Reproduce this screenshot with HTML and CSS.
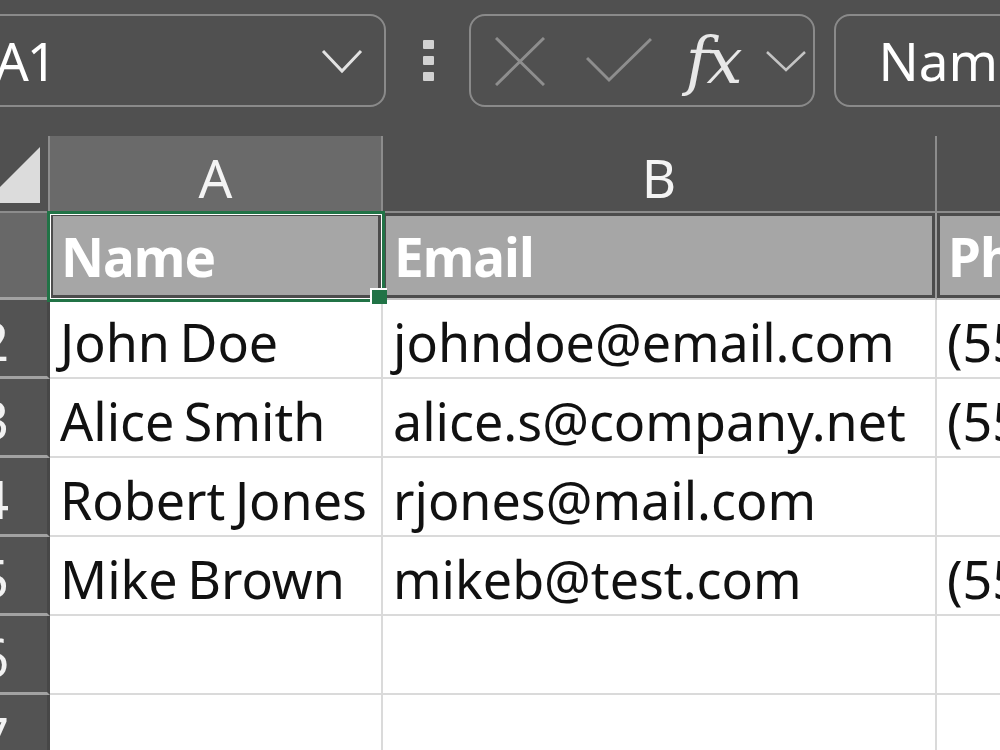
FILE: index.html
```html
<!DOCTYPE html>
<html lang="en">
<head>
    <meta charset="UTF-8">
    <meta name="viewport" content="width=device-width, initial-scale=1.0">
    <title>Contacts - Sheet</title>
    <link rel="stylesheet" href="styles.css">
</head>
<body>
    <div class="toolbar">
        <div class="namebox">
            <span class="namebox-text">A1</span>
            <svg class="chevron" width="42" height="26" viewBox="0 0 42 26">
                <path d="M2 3 L21 23 L40 3" fill="none" stroke="#e2e2e2" stroke-width="3"/>
            </svg>
        </div>

        <div class="kebab">
            <span></span><span></span><span></span>
        </div>

        <div class="fx-group">
            <svg class="icon-cancel" width="50" height="49" viewBox="0 0 50 49">
                <path d="M1 1 L49 48 M49 1 L1 48" stroke="#8e8e8e" stroke-width="3"/>
            </svg>
            <svg class="icon-enter" width="66" height="46" viewBox="0 0 66 46">
                <path d="M1 21 L23 43 L65 2" fill="none" stroke="#8e8e8e" stroke-width="3"/>
            </svg>
            <span class="fx">fx</span>
            <svg class="chevron-small" width="40" height="22" viewBox="0 0 40 22">
                <path d="M1 2 L20 20 L39 2" fill="none" stroke="#c4c4c4" stroke-width="2.5"/>
            </svg>
        </div>

        <div class="formula-input">Name</div>
    </div>

    <div class="sheet">
        <!-- column headers -->
        <div class="corner"></div>
        <div class="col-head selected">A</div>
        <div class="col-head">B</div>
        <div class="col-head">C</div>

        <!-- row 1: table header -->
        <div class="row-head selected">1</div>
        <div class="cell head">Name</div>
        <div class="cell head">Email</div>
        <div class="cell head">Phone</div>

        <div class="row-head">2</div>
        <div class="cell">John Doe</div>
        <div class="cell">johndoe@email.com</div>
        <div class="cell">(555) 123-4567</div>

        <div class="row-head">3</div>
        <div class="cell">Alice Smith</div>
        <div class="cell">alice.s@company.net</div>
        <div class="cell">(555) 987-6543</div>

        <div class="row-head">4</div>
        <div class="cell">Robert Jones</div>
        <div class="cell">rjones@mail.com</div>
        <div class="cell"></div>

        <div class="row-head">5</div>
        <div class="cell">Mike Brown</div>
        <div class="cell">mikeb@test.com</div>
        <div class="cell">(555) 246-8135</div>

        <div class="row-head">6</div>
        <div class="cell"></div>
        <div class="cell"></div>
        <div class="cell"></div>

        <div class="row-head">7</div>
        <div class="cell"></div>
        <div class="cell"></div>
        <div class="cell"></div>

        <!-- active cell outline -->
        <div class="selection">
            <div class="fill-handle"></div>
        </div>
    </div>
</body>
</html>
```

FILE: styles.css
```css
body {
    margin: 0;
    width: 1000px;
    height: 750px;
    overflow: hidden;
    background-color: #505050;
    font-family: "Noto Sans", "Open Sans", sans-serif;
    font-size: 53px;
    line-height: 1;
    color: #f2f2f2;
}

/* Formula bar */
.toolbar {
    height: 136px;
    box-sizing: border-box;
    padding-top: 14px;
    display: flex;
    align-items: flex-start;
    white-space: nowrap;
}

.namebox {
    width: 406px;
    height: 93px;
    box-sizing: border-box;
    margin-left: -20px;
    padding: 0 21px 0 13px;
    border: 2px solid #8a8a8a;
    border-radius: 16px;
    display: flex;
    align-items: center;
    justify-content: space-between;
}

.namebox-text {
    color: #ffffff;
    letter-spacing: -2px;
}

.kebab {
    margin-left: 37px;
    height: 93px;
    display: flex;
    flex-direction: column;
    justify-content: center;
    gap: 7px;
}

.kebab span {
    display: block;
    width: 11px;
    height: 9px;
    background-color: #d2d2d2;
    border-radius: 1px;
}

.fx-group {
    margin-left: 35px;
    width: 346px;
    height: 93px;
    box-sizing: border-box;
    border: 2px solid #8a8a8a;
    border-radius: 16px;
    display: flex;
    align-items: center;
    padding-left: 24px;
}

.icon-cancel {
    margin-top: 2px;
}

.icon-enter {
    margin-left: 41px;
    margin-top: -2px;
}

.fx {
    margin-left: 34px;
    width: 60px;
    font-family: "DejaVu Serif", "Liberation Serif", serif;
    font-style: italic;
    font-size: 64px;
    letter-spacing: -3px;
    color: #e8e8e8;
}

.chevron-small {
    margin-left: 20px;
}

.formula-input {
    margin-left: 19px;
    flex: 1;
    margin-right: -30px;
    height: 93px;
    box-sizing: border-box;
    border: 2px solid #8a8a8a;
    border-radius: 16px;
    padding-left: 43px;
    display: flex;
    align-items: center;
    color: #ffffff;
}

/* Grid */
.sheet {
    position: relative;
    display: grid;
    grid-template-columns: 50px 333px 554px 420px;
    grid-template-rows: 77px 87px repeat(6, 79px);
}

.sheet > div {
    box-sizing: border-box;
    white-space: nowrap;
    overflow: hidden;
}

.corner {
    position: relative;
    border-right: 2px solid #8c8c8c;
    border-bottom: 2px solid #8c8c8c;
}

.corner::after {
    content: "";
    position: absolute;
    right: 8px;
    top: 11px;
    width: 56px;
    height: 56px;
    background-color: #dcdcdc;
    clip-path: polygon(100% 0, 100% 100%, 0 100%);
}

.col-head {
    display: flex;
    justify-content: center;
    align-items: flex-end;
    padding-bottom: 7px;
    border-right: 2px solid #8c8c8c;
    border-bottom: 2px solid #8c8c8c;
    color: #f4f4f4;
}

.col-head.selected {
    background-color: #6a6a6a;
}

.row-head {
    display: flex;
    justify-content: flex-end;
    align-items: flex-end;
    padding-right: 38px;
    padding-bottom: 9px;
    background-color: #535353;
    border-right: 3px solid #474747;
    border-bottom: 3px solid #a2a2a2;
    color: #f2f2f2;
}

.row-head.selected {
    background-color: #686868;
    padding-bottom: 15px;
}

.cell {
    display: flex;
    align-items: flex-end;
    padding: 0 0 9px 10px;
    background-color: #ffffff;
    border-right: 2px solid #dadada;
    border-bottom: 2px solid #dadada;
    color: #111111;
    font-size: 52px;
    word-spacing: -4px;
}

.cell.head {
    background-color: #a6a6a6;
    box-shadow: inset 0 0 0 3px #4c4c4c;
    border-right-color: #9c9c9c;
    border-bottom-color: #c2c2c2;
    padding-bottom: 15px;
    padding-left: 11px;
    font-size: 53px;
    font-weight: bold;
    letter-spacing: -1px;
    color: #ffffff;
}

/* Active cell outline */
.selection {
    position: absolute;
    left: 47px;
    top: 75px;
    width: 338px;
    height: 91px;
    box-sizing: border-box;
    border: 3px solid #217346;
    box-shadow: inset 0 0 0 1px #ffffff;
    overflow: visible !important;
}

.fill-handle {
    position: absolute;
    right: -5px;
    bottom: -5px;
    width: 17px;
    height: 16px;
    box-sizing: border-box;
    background-color: #217346;
    border-left: 2px solid #ffffff;
    border-top: 2px solid #ffffff;
}
```
